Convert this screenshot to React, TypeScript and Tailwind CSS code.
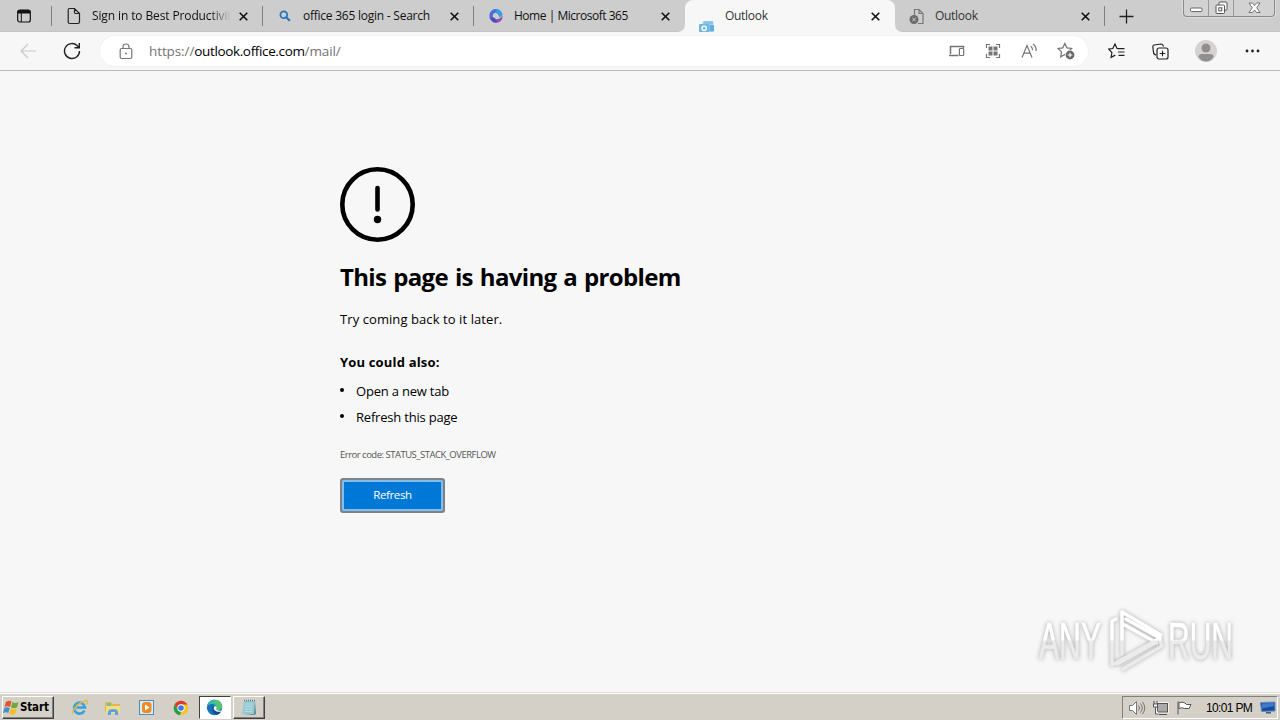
import React from "react";

const ui = "font-['Open_Sans','Noto_Sans',sans-serif]";

function Close() {
  return (
    <svg width="9" height="9" viewBox="0 0 9 9" stroke="#111" strokeWidth="1.600">
      <path d="M.7 .7 8.3 8.3M8.3 .7 .7 8.3" />
    </svg>
  );
}

function Tab({ icon, title, text, fade, active, last }: { icon: React.ReactNode; title: string; text: string; fade?: boolean; active?: boolean; last?: boolean }) {
  return (
    <div className={`relative flex h-8 shrink-0 items-center pl-[14px] ${active ? "w-[210px] rounded-t-[8px] bg-[#f7f7f7]" : "w-[211px]"}`}>
      {active && (
        <>
          <svg className="absolute bottom-0 -left-2" width="8" height="8"><path d="M8 0v8H0Q8 8 8 0" fill="#f7f7f7" /></svg>
          <svg className="absolute -right-2 bottom-0" width="8" height="8"><path d="M0 0v8h8Q0 8 0 0" fill="#f7f7f7" /></svg>
        </>
      )}
      <div className="flex h-8 w-4 shrink-0 items-center justify-center">{icon}</div>
      <div className={`ml-[10px] overflow-hidden text-[12px] leading-4 whitespace-nowrap ${active || last ? "w-[146px]" : "w-[147px]"} ${text} ${fade ? "[mask-image:linear-gradient(90deg,#000_118px,transparent_139px)]" : ""}`}>{title}</div>
      <Close />
    </div>
  );
}

function Sep() {
  return <div className="-ml-px h-5 w-px shrink-0 bg-[#7f7f7f]" />;
}

function PageIcon() {
  return (
    <svg width="16" height="18" viewBox="0 0 16 18" fill="none" stroke="#222" strokeWidth="1.2">
      <path d="M3.5 1.5h5l5 5v8.300q0 1.700-1.700 1.700H3.700q-1.500 0-1.500-1.500V3q0-1.500 1.300-1.500ZM8.500 1.500v3.800q0 1.200 1.200 1.200h3.800" />
    </svg>
  );
}

function SearchIcon() {
  return (
    <svg width="12" height="12" viewBox="0 0 12 12" fill="none" stroke="#2873b8">
      <circle cx="4.800" cy="4.800" r="3.400" strokeWidth="1.700" />
      <path d="m7.500 7.500 3.300 3.300" strokeWidth="2" />
    </svg>
  );
}

function M365() {
  return (
    <svg width="16" height="16" viewBox="0 0 16 16">
      <path d="M8 1c-3 0-6 2-6.500 5.500C1 10 2 12 4 13c1-1 1-2 .8-4C4.500 6 6 4.500 8.500 4.800L10 1.500Z" fill="#4a6fd4" />
      <path d="M9 1c3 .5 5.500 3 5.500 6.500l-3.300 2C10.800 7 10 5.500 7 4.800Z" fill="#3c9be0" />
      <path d="M14.500 7.500c.4 4-2 7-6 7.300L4 13c2 0 3.500-.5 4.500-2 1.500.5 4-.5 6-3.500Z" fill="#9050b8" />
      <path d="M3 10c0 4 3 5.500 6 4.500L7.500 10.500 4.700 9Z" fill="#554bb5" />
    </svg>
  );
}

function OutlookIcon() {
  return (
    <svg className="self-end" width="17" height="12" viewBox="0 0 17 12">
      <path d="M4 1h11v5H4z" fill="#9fd3ef" />
      <path d="M5 1h10v3H5z" fill="#84c4e8" />
      <path d="M11 5h5v7h-5z" fill="#62afe0" />
      <rect x="0" y="4" width="11" height="9" rx="1" fill="#73b6df" />
      <circle cx="5.500" cy="8.500" r="2.300" fill="none" stroke="#fff" strokeWidth="1.400" />
    </svg>
  );
}

function DeadPage() {
  return (
    <svg width="16" height="17" viewBox="0 0 16 17" fill="none" stroke="#777">
      <path d="M5.500 7V1.500H10l4 4v10H9M10 1.500v4h4" strokeWidth="1.200" />
      <circle cx="5" cy="11.500" r="4.500" fill="#6b6b6b" stroke="none" />
      <path d="m3.300 10 3.400 3M6.700 10l-3.400 3" stroke="#ccc" />
    </svg>
  );
}

function TabStrip() {
  return (
    <div className="flex h-8 items-center bg-[#cdcdcd] shadow-[inset_0_-1px_0_#c3c3c3]">
      <div className="flex w-[52px] justify-center pr-1">
        <svg width="16" height="16" viewBox="0 0 16 16">
          <rect x="1.700" y="2" width="12.600" height="12" rx="2" fill="none" stroke="#111" strokeWidth="1.200" />
          <path d="M1.500 3.500Q1.500 2 3.500 2h9q2 0 2 2v1.500h-13Z" fill="#111" />
          <path d="M5.300 5v9" stroke="#111" />
        </svg>
      </div>
      <Sep />
      <Tab icon={<PageIcon />} title="Sign in to Best Productivity" text="text-[#111] tracking-[-0.12px]" fade />
      <Sep />
      <Tab icon={<SearchIcon />} title="office 365 login - Search" text="text-[#111] tracking-[-0.24px]" />
      <Sep />
      <Tab icon={<M365 />} title="Home | Microsoft 365" text="text-[#111] tracking-[-0.48px]" />
      <Tab icon={<OutlookIcon />} title="Outlook" text="text-[#333] tracking-[-0.3px]" active />
      <Tab icon={<DeadPage />} title="Outlook" text="text-[#333] tracking-[-0.3px]" last />
      <div className="-ml-px h-5 w-px shrink-0 -translate-x-px bg-[#7f7f7f]" />
      <svg className="ml-[13px]" width="15" height="15" viewBox="0 0 15 15" stroke="#222" strokeWidth="1.300"><path d="M7.500 .5v14M.5 7.500h14" /></svg>
      <div className="mr-[5px] ml-auto flex h-[17px] w-[92px] self-start rounded-b-[4px] border border-t-0 border-[#888] bg-[#d2d2d2] shadow-[0_0_0_1px_#dedede]">
        <div className="flex w-[25px] items-center justify-center border-r border-[#999]">
          <svg className="mt-[3px]" width="13" height="6"><rect x=".5" y="1" width="11.500" height="3.600" rx="1" fill="#fff" stroke="#666" /></svg>
        </div>
        <div className="flex w-[25px] items-center justify-center border-r border-[#999]">
          <svg width="13" height="14" fill="#fff" stroke="#555"><rect x="4" y="1" width="8" height="8" rx="1" /><rect x="1" y="4" width="8.500" height="8.500" rx="1" /><rect x="3.800" y="6.800" width="3" height="3" /></svg>
        </div>
        <div className="flex flex-1 items-center justify-center">
          <svg width="13" height="12" viewBox="0 0 13 12" fill="#fff" stroke="#666" strokeWidth=".9"><path d="M1 1h3.500l2 2.500 2-2.500H12L8.700 5.800 12 10.500H8.500l-2-2.500-2 2.500H1l3.300-4.700Z" /></svg>
        </div>
      </div>
    </div>
  );
}

const star = "M6.800 1.500 8.700 5.500 13 6.100 9.900 9.200l.7 4.400-3.800-2.100L3 13.600l.7-4.400L.6 6.100l4.300-.6Z";

function Toolbar() {
  return (
    <div className="flex h-[39px] items-center border-b border-[#b9b9b9] bg-[#f7f7f7]">
      <svg className="ml-5" width="16" height="16" viewBox="0 0 16 16" fill="none" stroke="#c8c8c8" strokeWidth="1.200"><path d="M16 8H1M8 1 1 8l7 7" /></svg>
      <svg className="ml-[27px]" width="18" height="18" viewBox="0 0 18 18" fill="none" stroke="#222" strokeWidth="1.400"><path d="M16.500 9A7.500 7.500 0 1 1 14.300 3.700L16 5.500M16.300 1v4.800h-4.800" /></svg>
      <div className="ml-[19px] flex h-[30px] w-[988px] items-center rounded-full bg-white pr-[13px] pl-[19px] shadow-[0_0_0_1px_#f2f2f2]">
        <svg width="14" height="17" viewBox="0 0 14 17" fill="none" stroke="#767676" strokeWidth="1.200"><rect x="1.200" y="5.500" width="11.600" height="10" rx="1.500" /><path d="M4 5.500V4Q4 1 7 1t3 3v1.500" /><circle cx="7" cy="10.500" r="1" fill="#767676" stroke="none" /></svg>
        <div className="ml-4 text-[13.5px] leading-5 tracking-[-0.1px] whitespace-nowrap text-[#737373]">https://<span className="tracking-[-0.36px] text-black">outlook.office.com</span>/mail/</div>
        <div className="ml-auto flex items-center text-[#747474]">
          <svg className="mr-5" width="17" height="14" viewBox="0 0 17 14" fill="none" stroke="currentColor" strokeWidth="1.200"><path d="M2.500 10V2.500h13V4M1 11.500h9.500" strokeWidth="1.500" /><rect x="11.400" y="4.500" width="4.300" height="7" rx=".8" /></svg>
          <svg className="mr-5" width="16" height="16" viewBox="0 0 16 16" fill="none" stroke="currentColor" strokeWidth="1.200"><path d="M1.500 5V1.500H5M11 1.500h3.500V5M14.500 11v3.500H11M5 14.500H1.500V11" /><path fill="currentColor" stroke="none" d="M3.500 3.500h4v4h-4zM8.500 3.500h4v4h-4zM3.500 8.500h4v4h-4zM8.500 8.500h4v4h-4z" /></svg>
          <svg className="mr-[19px]" width="17" height="16" viewBox="0 0 17 16" fill="none" stroke="currentColor" strokeWidth="1.200"><path d="M1 14.500 6 2.500l5 12M2.900 10.200h6.200M9.800 3.200q1.900 1.500 1.700 4M12 1q3.700 2.500 3 7" /></svg>
          <svg width="18" height="18" viewBox="0 0 18 18" fill="none" stroke="currentColor" strokeWidth="1.100"><path transform="translate(.4 -.2) scale(1.100)" d={star} /><circle cx="13" cy="13" r="5" fill="#fff" stroke="none" /><circle cx="13" cy="13" r="4.400" fill="#666" stroke="none" /><path d="M13 10.700v4.600M10.700 13h4.600" stroke="#fff" /></svg>
        </div>
      </div>
      <svg className="ml-5" width="17" height="16" viewBox="0 0 17 16" fill="none" stroke="#222" strokeWidth="1.200"><path d="M9.500 5.500H9L7 1 4.800 5.500.7 6.100l3.200 3.400-.8 4.800 4.200-2.200M9.500 5.600h7M10 9h6.500M10.500 12.400h6" /></svg>
      <svg className="ml-[27px]" width="17" height="17" viewBox="0 0 17 17" fill="none" stroke="#222" strokeWidth="1.200"><path d="M4 12Q1.500 11.500 1.500 9L.8 4Q.7 2.500 2 2l7-1q1.500 0 2 1.300l.5 1.200" /><rect x="5" y="5" width="11" height="11" rx="2" /><path d="M10.500 7.700v5.600M7.700 10.500h5.600" /></svg>
      <svg className="ml-[26px]" width="22" height="22" viewBox="0 0 22 22"><circle cx="11" cy="11" r="11" fill="#d5d3d1" /><circle cx="11" cy="8" r="4.500" fill="#918e8b" /><path d="M3.500 17Q3.500 14 7 14h8q3.500 0 3.500 3-3 4.500-7.500 4.500T3.500 17" fill="#918e8b" /></svg>
      <svg className="ml-7" width="15" height="4" viewBox="0 0 15 4" fill="#222"><circle cx="2" cy="2" r="1.400" /><circle cx="7.500" cy="2" r="1.400" /><circle cx="13" cy="2" r="1.400" /></svg>
    </div>
  );
}

function Watermark() {
  return (
    <svg className="absolute top-[523px] left-[1020px] overflow-visible drop-shadow-[0_0_2px_#a8a8a8]" width="240" height="90" viewBox="1020 594 240 90">
      <defs>
        <linearGradient id="wm" gradientUnits="userSpaceOnUse" x1="0" y1="604" x2="0" y2="680">
          <stop offset=".47" stopColor="#ffffff" /><stop offset=".49" stopColor="#ebebeb" />
        </linearGradient>
      </defs>
      <g fill="url(#wm)" stroke="url(#wm)" strokeWidth=".7" fontFamily="'Liberation Sans Narrow','Liberation Sans',sans-serif" fontSize="52">
        <text x="1039" y="659" textLength="62" lengthAdjust="spacingAndGlyphs">ANY</text>
        <text x="1168" y="659" textLength="65" lengthAdjust="spacingAndGlyphs">RUN</text>
      </g>
      <g fill="none" stroke="url(#wm)" strokeWidth="3.500" strokeLinejoin="round" strokeLinecap="round">
        <path d="M1122 654V612l39 23-3 2-32-18M1123 624l34 19" />
        <path d="M1116 619l-4 2v44l48-27M1123 669l39-23-2-6M1117 664l38-21" />
      </g>
    </svg>
  );
}

function ErrorPage() {
  return (
    <main className="relative h-[621px] bg-[#f7f7f7] pt-24 pl-[340px] text-black">
      <svg width="75" height="75" viewBox="0 0 75 75" fill="none" stroke="#000"><circle cx="37.500" cy="37.500" r="35.200" strokeWidth="4.600" /><path d="M37.500 21v21.500" strokeWidth="4.600" strokeLinecap="round" /><circle cx="37.500" cy="52.500" r="3.700" fill="#000" stroke="none" /></svg>
      <h1 className="mt-[17px] text-[24px] leading-9 font-bold tracking-[-0.65px] whitespace-nowrap [word-spacing:1.3px]">This page is having a problem</h1>
      <p className="mt-[14px] text-[13px] leading-5 tracking-[0.08px]">Try coming back to it later.</p>
      <h2 className="mt-[23px] text-[13px] leading-5 font-bold tracking-[0.17px]">You could also:</h2>
      <ul className="mt-[6px] text-[13px] leading-[26px] tracking-[-0.2px]">
        {["Open a new tab", "Refresh this page"].map((item) => (
          <li key={item} className="flex h-[26px] items-center"><span className="mr-[12px] mb-[3px] size-1 rounded-full bg-black" />{item}</li>
        ))}
      </ul>
      <p className="mt-[15px] text-[9.5px] leading-5 tracking-[-0.5px] text-[#555]">Error code: STATUS_STACK_OVERFLOW</p>
      <button className="mt-[13px] flex h-[35px] w-[105px] items-center justify-center rounded-[3px] border-2 border-[#7d8287] bg-[#0078d7] pb-px text-[11.5px] tracking-[-0.4px] text-white shadow-[inset_0_0_0_2px_#82bdec]">Refresh</button>
      <Watermark />
    </main>
  );
}

function Taskbar() {
  return (
    <footer className="flex h-7 items-end border-t border-[#dedbd5] bg-[#d4d0c8] pb-[1px] shadow-[inset_0_1px_0_#fff]">
      <div className="ml-[2px] flex h-[23px] w-[52px] items-center border border-t-white border-r-[#404040] border-b-[#404040] border-l-white font-['DejaVu_Sans_Condensed','DejaVu_Sans',sans-serif] text-[11.5px] font-bold tracking-[-0.15px] text-black shadow-[inset_-1px_-1px_0_#808080]">
        <svg className="shrink-0" width="17" height="17" viewBox="0 0 17 17">
          <path d="M3 3q3-2 5.500-.5L7 8Q4 6.500 1.500 8Z" fill="#e9532b" />
          <path d="M9.500 3Q12 5 15.500 3L14 8.500Q11 10 8 8.300Z" fill="#72a83a" />
          <path d="M1.300 9Q4 7.500 6.700 9L5.300 14Q3 12.500 0 14Z" fill="#438fd0" />
          <path d="M7.700 9.300Q11 11 13.700 9.500L12 15q-3 1.500-5.700-.3Z" fill="#f4bf24" />
        </svg>Start
      </div>
      <div className="flex h-[23px] items-center">
        <svg className="ml-[17px]" width="18" height="17" viewBox="0 0 18 17" fill="none">
          <path d="M13.500 11.500A5.500 5.500 0 1 1 14 8.500H5" stroke="#39a2dc" strokeWidth="2.600" />
          <path d="M2 14.500C-.5 15 4 5 15 1.500c2-.5 2 2 .5 4" stroke="#e6b844" strokeWidth="1.400" />
        </svg>
        <svg className="ml-[15px]" width="18" height="17" viewBox="0 0 18 17">
          <path d="M1 3h6l1 2h8v8H1Z" fill="#e0b850" /><path d="M3 4h4v3H3Z" fill="#7fc090" /><path d="M2 7h14v7H2Z" fill="#f5dd85" /><path d="M4 16v-3q0-3 5-3t5 3v3h-3v-3H7v3Z" fill="#5ba4d8" />
        </svg>
        <svg className="ml-4" width="17" height="17" viewBox="0 0 17 17"><rect x="1.500" y="1.500" width="14" height="14" fill="#d9ecf9" stroke="#4f8dbb" /><rect x="4" y="3" width="9.500" height="11" rx="3" fill="#f08b20" /><path d="m7 5.500 4.500 3-4.500 3Z" fill="#fff" /></svg>
        <svg className="ml-[18px]" width="16" height="16" viewBox="0 0 16 16">
          <circle cx="8" cy="8" r="7.300" fill="#f2c52d" /><path d="M1.700 4.300A7.300 7.300 0 0 1 14.300 4.500H8Q5 5 4.900 9.500Z" fill="#da3c30" /><path d="m1.700 4.300 3.500 6L8 11.500l-1 3.700A7.300 7.300 0 0 1 1.700 4.300" fill="#249b50" /><circle cx="8" cy="8" r="3.700" fill="#fff" /><circle cx="8" cy="8" r="2.800" fill="#3f79d8" />
        </svg>
      </div>
      <div className="ml-[10px] flex h-[23px] w-8 items-center justify-center border border-t-[#404040] border-r-white border-b-white border-l-[#404040] bg-white pr-px">
        <svg width="17" height="17" viewBox="0 0 17 17">
          <circle cx="8.500" cy="8.500" r="7.700" fill="#1672bc" /><path d="M1 7.500C1.500 3 5 .8 8.500 .8c5 0 7.800 3.500 7.700 6.800-.1 2.500-2 3.700-4.200 3.700-2 0-2.300-1-1.700-1.800C11.500 7 8 4.500 5 5 3 5.300 1.500 6.500 1 7.500" fill="#36b9a8" /><path d="M10 1q5.500 1 6 6.500-.5 3-4.500 3.500-2-.5-1-2.500Q12 5 7 3Z" fill="#56c56b" /><path d="M6.500 7.500Q5 14 10.500 15.700q3-.5 5-3.500-4 1.500-6.500-.7Q6.800 9.500 8 7.500Z" fill="#124c8c" /><path d="M8 7.500q2.500-1 2.600 1-.9 1.500.2 2.500 2.200 1 4.700.5l-.5 1q-3.500 1-6-1Q7 9.500 8 7.500" fill="#fff" />
        </svg>
      </div>
      <div className="ml-[2px] flex h-[23px] w-8 items-center justify-center border border-t-white border-r-[#404040] border-b-[#404040] border-l-white shadow-[inset_-1px_-1px_0_#808080]">
        <svg width="16" height="17" viewBox="0 0 16 17"><path d="M3 2h11l-1 13H1Z" fill="#94c8d6" /><path d="m14 2 1 13-2 1-11-.5 11-.5Z" fill="#5b8790" /><path d="M4 5h8M3.500 7.500h8M3.500 10h8M3 12.500h8" stroke="#b6dbe4" /><path d="M3 1.500h11" stroke="#66777b" strokeWidth="1.500" strokeDasharray="1 1" /></svg>
      </div>
      <div className="mr-[2px] ml-auto flex h-[23px] w-[156px] items-center border border-t-[#808080] border-r-white border-b-white border-l-[#808080] pl-[5px]">
        <svg width="18" height="16" viewBox="0 0 18 16" fill="none" stroke="#777"><path d="M1.500 5.500h3l4-4v13l-4-4h-3Z" fill="#fff" /><path d="M10.500 5.500q2 2.500 0 5M12.500 3.500q3.500 4.500 0 9M14.500 2q4.500 6 0 12" /></svg>
        <svg className="ml-[6px]" width="18" height="16" viewBox="0 0 18 16" fill="none" stroke="#555"><rect x="5.500" y="3.500" width="10" height="8.500" fill="#aaa" stroke="#fff" strokeWidth="2.500" /><rect x="5.500" y="3.500" width="10" height="8.500" fill="#aaa" /><path d="M7 14.500h8M2 1v3M5 1v3M1.500 4h4v3h-4ZM3.500 7v7h3" fill="#fff" /></svg>
        <svg className="ml-[6px]" width="17" height="16" viewBox="0 0 17 16" fill="#fff" stroke="#555"><path d="M2 1.500v13M3 2.500q3-1 6 .5l1.500 1.500H15l-2 4H8.500Q6 7 3 8.500Z" /></svg>
        <span className="ml-[13px] w-[54px] font-['Liberation_Sans',sans-serif] text-[12px] tracking-[-0.65px] whitespace-nowrap text-black">10:01 PM</span>
        <svg width="16" height="14" viewBox="0 0 16 14"><path d="M.5 1.500 15 1v9L1.500 10.500Z" fill="#174b9d" stroke="#6991c3" /><path d="m2 2.500 12-.5v3L2 7.500Z" fill="#3f79ca" /><path d="M6 11h5v1.500H6z" fill="#4a5870" /></svg>
      </div>
    </footer>
  );
}

export default function App() {
  return (
    <div className={`flex h-[720px] w-[1280px] flex-col overflow-hidden bg-[#f7f7f7] ${ui}`}>
      <TabStrip />
      <Toolbar />
      <ErrorPage />
      <Taskbar />
    </div>
  );
}
